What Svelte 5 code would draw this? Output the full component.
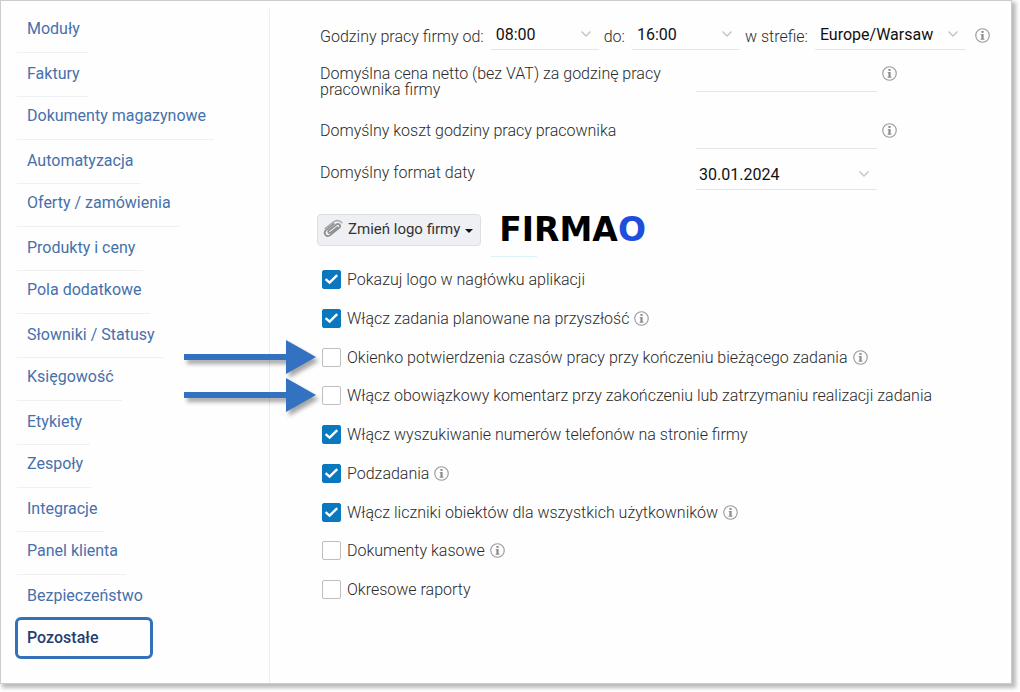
<script lang="ts">
    let menu = [
        "Moduły",
        "Faktury",
        "Dokumenty magazynowe",
        "Automatyzacja",
        "Oferty / zamówienia",
        "Produkty i ceny",
        "Pola dodatkowe",
        "Słowniki / Statusy",
        "Księgowość",
        "Etykiety",
        "Zespoły",
        "Integracje",
        "Panel klienta",
        "Bezpieczeństwo",
        "Pozostałe"
    ];

    let active = $state("Pozostałe");

    let from = $state("08:00");
    let to = $state("16:00");
    let zone = $state("Europe/Warsaw");
    let dateFormat = $state("30.01.2024");
    let price = $state("");
    let cost = $state("");

    let options = $state([
        { id: "logo", text: "Pokazuj logo w nagłówku aplikacji", checked: true, info: false, arrow: false },
        { id: "future", text: "Włącz zadania planowane na przyszłość", checked: true, info: true, arrow: false },
        { id: "confirm", text: "Okienko potwierdzenia czasów pracy przy kończeniu bieżącego zadania", checked: false, info: true, arrow: true },
        { id: "comment", text: "Włącz obowiązkowy komentarz przy zakończeniu lub zatrzymaniu realizacji zadania", checked: false, info: false, arrow: true },
        { id: "phones", text: "Włącz wyszukiwanie numerów telefonów na stronie firmy", checked: true, info: false, arrow: false },
        { id: "subtasks", text: "Podzadania", checked: true, info: true, arrow: false },
        { id: "counters", text: "Włącz liczniki obiektów dla wszystkich użytkowników", checked: true, info: true, arrow: false },
        { id: "cash", text: "Dokumenty kasowe", checked: false, info: true, arrow: false },
        { id: "reports", text: "Okresowe raporty", checked: false, info: false, arrow: false }
    ]);

    const select = (e: MouseEvent, name: string) => {
        e.preventDefault();
        active = name;
    };
</script>

{#snippet info()}
    <svg class="info" viewBox="0 0 16 16" aria-hidden="true">
        <circle cx="8" cy="8" r="7.2" fill="none" stroke="#999" stroke-width="1.2" />
        <rect x="6.8" y="3.2" width="2.4" height="2" fill="#8c8c8c" />
        <path d="M6 6.4h3.2v5H10v1H6v-1h.8V7.3H6z" fill="#8c8c8c" />
    </svg>
{/snippet}

{#snippet chevron()}
    <svg class="chevron" viewBox="0 0 10 6" aria-hidden="true">
        <path d="M.5.5 5 5 9.5.5" fill="none" stroke="#c4c4c4" stroke-width="1.4" />
    </svg>
{/snippet}

<div class="page">
    <div class="frame">
        <nav class="sidebar">
            <ul>
                {#each menu as name}
                    <li class:active={name === active}>
                        <a href="#settings" onclick={e => select(e, name)}>{name}</a>
                    </li>
                {/each}
            </ul>
        </nav>

        <main class="content">
            <div class="hours">
                <label for="from">Godziny pracy firmy od:</label>
                <div class="select time">
                    <select id="from" bind:value={from}>
                        <option>08:00</option>
                        <option>09:00</option>
                    </select>
                    {@render chevron()}
                </div>
                <label for="to">do:</label>
                <div class="select time">
                    <select id="to" bind:value={to}>
                        <option>16:00</option>
                        <option>17:00</option>
                    </select>
                    {@render chevron()}
                </div>
                <label for="zone">w strefie:</label>
                <div class="select zone">
                    <select id="zone" bind:value={zone}>
                        <option>Europe/Warsaw</option>
                    </select>
                    {@render chevron()}
                </div>
                {@render info()}
            </div>

            <div class="field">
                <label for="price">Domyślna cena netto (bez VAT) za godzinę pracy pracownika firmy</label>
                <input id="price" type="text" bind:value={price} />
                {@render info()}
            </div>
            <div class="field cost">
                <label for="cost">Domyślny koszt godziny pracy pracownika</label>
                <input id="cost" type="text" bind:value={cost} />
                {@render info()}
            </div>
            <div class="field date">
                <label for="date">Domyślny format daty</label>
                <div class="select">
                    <select id="date" bind:value={dateFormat}>
                        <option>30.01.2024</option>
                        <option>2024-01-30</option>
                    </select>
                    {@render chevron()}
                </div>
            </div>

            <div class="company">
                <button type="button" class="logo-btn">
                    <svg class="clip" viewBox="0 0 22 20" aria-hidden="true">
                        <path d="M16.5 8.2 9.6 13.6c-1.6 1.2-3.3-.8-1.8-2.1l7.6-6c2.4-1.8 5.2 1.3 2.8 3.4l-8.9 7.2c-3.6 2.7-7.8-1.8-4.3-5l7.8-6.3" transform="translate(-1 0)" fill="none" stroke="#8f8f8f" stroke-width="1.7" stroke-linecap="round" />
                        <path d="M3.2 9.7 11.6 3c3-2.2 6.4-1.6 8.2.6" fill="none" stroke="#a4a4a4" stroke-width="1.5" stroke-linecap="round" />
                    </svg>
                    Zmień logo firmy
                    <span class="caret"></span>
                </button>
                <div class="logo">FIRMA<span>O</span></div>
            </div>

            <div class="options">
                {#each options as option}
                    <div class="option">
                        {#if option.arrow}
                            <svg class="arrow" viewBox="0 0 132 34" aria-hidden="true">
                                <path d="M0 14h102V0l30 17-30 17V20H0z" fill="#3272c0" />
                            </svg>
                        {/if}
                        <span class="check">
                            <input id={option.id} type="checkbox" bind:checked={option.checked} />
                            <svg viewBox="0 0 19 19" aria-hidden="true">
                                <path d="M3.6 9.2 7.6 12.6 15.2 5.2" fill="none" stroke="#fff" stroke-width="2.4" />
                            </svg>
                        </span>
                        <label for={option.id}>{option.text}</label>
                        {#if option.info}
                            {@render info()}
                        {/if}
                    </div>
                {/each}
            </div>
        </main>
    </div>
</div>

<style>
    :global(body) {
        margin: 0;
        background: #fff;
    }

    .page {
        box-sizing: border-box;
        min-height: 100vh;
        padding: 0 8px 8px 0;
        display: flex;
        font-family: Roboto, "Liberation Sans", sans-serif;
        font-size: 16px;
        line-height: 20px;
        color: #2a2a2a;
    }

    .frame {
        flex: 1;
        display: flex;
        box-sizing: border-box;
        border: 1px solid #ccc;
        background: #fefefe;
        box-shadow: 3px 3px 4px 1px #bbb;
    }

    .sidebar {
        box-sizing: border-box;
        flex: 0 0 269px;
        margin-top: 8px;
        padding: 1px 0 20px 16px;
        border-right: 1px solid #eceeef;
    }

    ul {
        list-style: none;
        margin: 0;
        padding: 0;
        display: flex;
        flex-direction: column;
        align-items: flex-start;
    }

    li {
        box-sizing: border-box;
        min-width: 71px;
        height: 43px;
        padding: 9px 8px 0 10px;
        border-bottom: 1px solid #eef1f2;
    }

    li:nth-child(even) {
        height: 44px;
        padding-top: 11px;
    }

    li:nth-last-child(2) {
        height: 42px;
        border-bottom: none;
    }

    li.active {
        width: 138px;
        height: 42px;
        margin-left: -2px;
        padding: 8px 9px;
        border: 3px solid #3571b8;
        border-radius: 6px;
    }

    li a {
        color: #4770ab;
        text-decoration: none;
    }

    li.active a {
        color: #1f3f73;
        font-weight: 500;
    }

    .content {
        flex: 1;
        padding: 18px 20px 40px 50px;
    }

    label {
        font-weight: 300;
    }

    .hours {
        display: flex;
        align-items: center;
        height: 31px;
    }

    .hours label {
        padding-top: 4px;
    }

    .hours .select {
        margin: 0 5px 0 7px;
    }

    .hours .info {
        margin: 2px 0 0 4px;
    }

    .select {
        position: relative;
    }

    .time {
        width: 108px;
    }

    .zone {
        width: 151px;
    }

    select,
    input[type="text"] {
        box-sizing: border-box;
        display: block;
        width: 100%;
        height: 31px;
        margin: 0;
        padding: 2px 4px 0;
        border: none;
        border-bottom: 1px solid #e6e6e6;
        border-radius: 0;
        outline: none;
        appearance: none;
        background: transparent;
        font: inherit;
        color: #111;
    }

    .hours select {
        padding-left: 5px;
    }

    .date select {
        padding-left: 3px;
    }

    .chevron {
        position: absolute;
        top: 12px;
        right: 8px;
        width: 10px;
        height: 6px;
        pointer-events: none;
    }

    .info {
        flex: none;
        width: 15px;
        height: 15px;
    }

    .field {
        display: grid;
        grid-template-columns: 371px 181px 15px;
        column-gap: 5px;
        align-items: start;
        margin-top: 11px;
    }

    .field label {
        line-height: 16px;
        padding: 5px 12px 0 0;
    }

    .field .info {
        margin-top: 5px;
    }

    .cost {
        margin-top: 20px;
    }

    .date {
        margin-top: 10px;
    }

    .date label {
        padding-top: 6px;
    }

    .company {
        display: flex;
        align-items: center;
        gap: 18px;
        margin: 24px 0 0 -3px;
    }

    .logo-btn {
        display: flex;
        align-items: center;
        box-sizing: border-box;
        height: 32px;
        padding: 0 7px 2px 4px;
        border: 1px solid #dcdfe2;
        border-radius: 4px;
        background: #eef0f3;
        font: inherit;
        font-size: 15px;
        color: #333;
    }

    .clip {
        width: 22px;
        height: 20px;
        margin-right: 4px;
    }

    .caret {
        margin: 3px 0 0 5px;
        border: 4px solid transparent;
        border-top: 4px solid #111;
        border-bottom: none;
    }

    .logo {
        position: relative;
        font-family: "DejaVu Sans", sans-serif;
        font-weight: 700;
        font-size: 33px;
        line-height: 32px;
        color: #000;
    }

    .logo span {
        color: #1d4fdc;
    }

    .logo::after {
        content: "";
        position: absolute;
        top: 42px;
        left: -8px;
        width: 46px;
        height: 1px;
        background: #d9f1fa;
    }

    .options {
        display: flex;
        flex-direction: column;
        gap: 19px;
        margin: 23px 0 0 2px;
    }

    .option {
        position: relative;
        display: flex;
        align-items: center;
        height: 20px;
    }

    .option:nth-child(4n) {
        margin-top: -1px;
    }

    .option label {
        padding-top: 2px;
    }

    .option .info {
        margin-left: 5px;
    }

    .check {
        display: grid;
        margin-right: 6px;
    }

    .check input,
    .check svg {
        grid-area: 1 / 1;
        width: 19px;
        height: 19px;
    }

    .check svg {
        pointer-events: none;
    }

    .check input {
        box-sizing: border-box;
        margin: 0;
        appearance: none;
        border: 1px solid #bfbfbf;
        border-radius: 2px;
        background: #fff;
    }

    .check input:checked {
        border-color: #0a78bf;
        background: #0a78bf;
    }

    .arrow {
        position: absolute;
        right: 100%;
        margin-right: 6px;
        width: 132px;
        height: 34px;
        overflow: visible;
        filter: drop-shadow(3px 4px 2px rgba(0, 0, 0, 0.35));
    }
</style>
